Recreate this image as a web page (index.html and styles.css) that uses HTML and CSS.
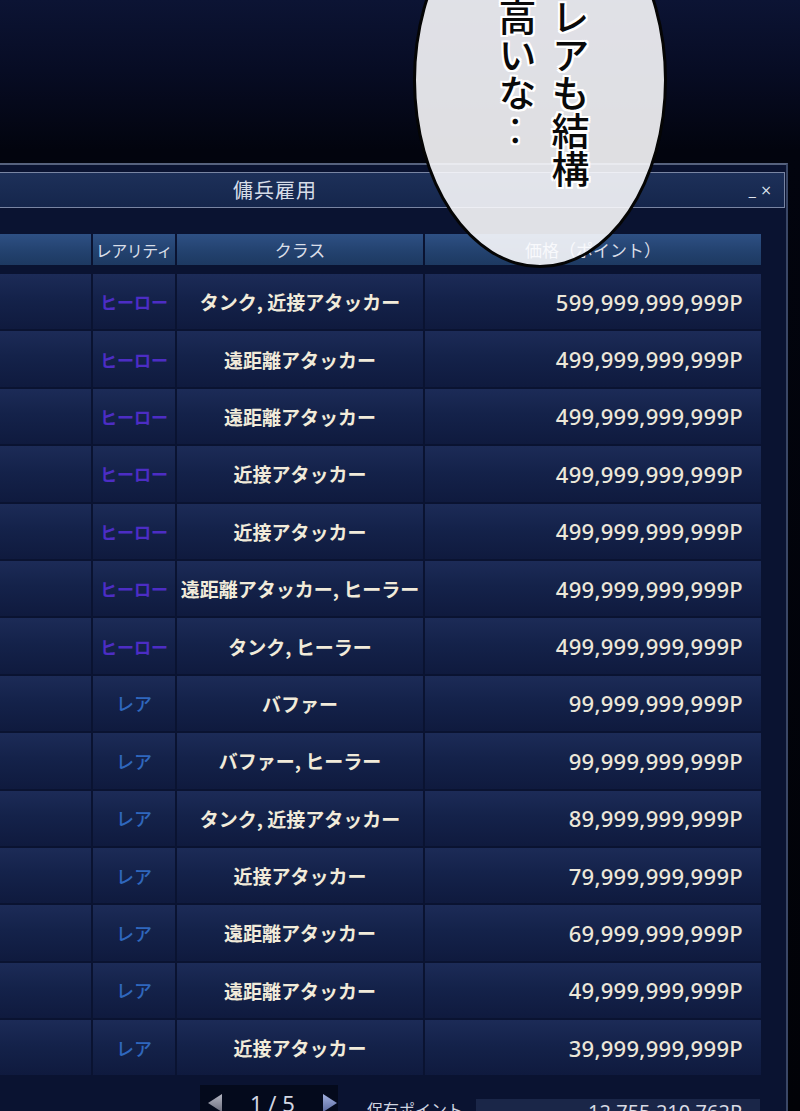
FILE: index.html
```html
<!DOCTYPE html>
<html lang="ja">
<head>
<meta charset="utf-8">
<title>傭兵雇用</title>
<link rel="stylesheet" href="styles.css">
</head>
<body>
<div class="stage">
  <div class="window">
    <div class="titlebar">
      <span class="title">傭兵雇用</span>
      <span class="controls">_ ×</span>
    </div>
    <div class="content">
      <div class="table">
        <div class="thead">
          <div class="th"></div>
          <div class="th th-narrow">レアリティ</div>
          <div class="th">クラス</div>
          <div class="th">価格（ポイント）</div>
        </div>
        <div class="tbody">
          <div class="tr"><div class="td"></div><div class="td hero">ヒーロー</div><div class="td cls">タンク, 近接アタッカー</div><div class="td price">599,999,999,999P</div></div>
          <div class="tr"><div class="td"></div><div class="td hero">ヒーロー</div><div class="td cls">遠距離アタッカー</div><div class="td price">499,999,999,999P</div></div>
          <div class="tr"><div class="td"></div><div class="td hero">ヒーロー</div><div class="td cls">遠距離アタッカー</div><div class="td price">499,999,999,999P</div></div>
          <div class="tr"><div class="td"></div><div class="td hero">ヒーロー</div><div class="td cls">近接アタッカー</div><div class="td price">499,999,999,999P</div></div>
          <div class="tr"><div class="td"></div><div class="td hero">ヒーロー</div><div class="td cls">近接アタッカー</div><div class="td price">499,999,999,999P</div></div>
          <div class="tr"><div class="td"></div><div class="td hero">ヒーロー</div><div class="td cls">遠距離アタッカー, ヒーラー</div><div class="td price">499,999,999,999P</div></div>
          <div class="tr"><div class="td"></div><div class="td hero">ヒーロー</div><div class="td cls">タンク, ヒーラー</div><div class="td price">499,999,999,999P</div></div>
          <div class="tr"><div class="td"></div><div class="td rare">レア</div><div class="td cls">バファー</div><div class="td price">99,999,999,999P</div></div>
          <div class="tr"><div class="td"></div><div class="td rare">レア</div><div class="td cls">バファー, ヒーラー</div><div class="td price">99,999,999,999P</div></div>
          <div class="tr"><div class="td"></div><div class="td rare">レア</div><div class="td cls">タンク, 近接アタッカー</div><div class="td price">89,999,999,999P</div></div>
          <div class="tr"><div class="td"></div><div class="td rare">レア</div><div class="td cls">近接アタッカー</div><div class="td price">79,999,999,999P</div></div>
          <div class="tr"><div class="td"></div><div class="td rare">レア</div><div class="td cls">遠距離アタッカー</div><div class="td price">69,999,999,999P</div></div>
          <div class="tr"><div class="td"></div><div class="td rare">レア</div><div class="td cls">遠距離アタッカー</div><div class="td price">49,999,999,999P</div></div>
          <div class="tr"><div class="td"></div><div class="td rare">レア</div><div class="td cls">近接アタッカー</div><div class="td price">39,999,999,999P</div></div>
        </div>
      </div>
      <div class="footer">
        <div class="pager">
          <svg class="arrow arrow-left" width="16" height="20" viewBox="0 0 16 20"><defs><linearGradient id="gl" x1="0" y1="0" x2="0" y2="1"><stop offset="0" stop-color="#b4b6c2"/><stop offset="1" stop-color="#6c6e7e"/></linearGradient></defs><polygon points="15,1 15,19 1,10" fill="url(#gl)"/></svg>
          <span class="page">1 / 5</span>
          <svg class="arrow" width="16" height="20" viewBox="0 0 16 20"><defs><linearGradient id="gr" x1="0" y1="0" x2="0" y2="1"><stop offset="0" stop-color="#a3b2e0"/><stop offset="1" stop-color="#5b6aa0"/></linearGradient></defs><polygon points="1,1 1,19 15,10" fill="url(#gr)"/></svg>
        </div>
        <div class="owned-label">保有ポイント</div>
        <div class="owned-box">12,755,210,762P</div>
      </div>
    </div>
  </div>
  <div class="bubble"></div>
  <div class="bubble-text">レアも結構<br>高いな‥</div>
</div>
</body>
</html>
```
FILE: styles.css
```css
html, body {
  margin: 0;
  padding: 0;
}
body {
  width: 800px;
  height: 1111px;
  overflow: hidden;
  background: linear-gradient(180deg, #0c1434 0px, #070c24 70px, #02040e 150px, #010207 1111px);
  font-family: "Noto Sans CJK JP", "Noto Sans", sans-serif;
}
.stage {
  position: relative;
  width: 800px;
  height: 1111px;
  overflow: hidden;
}
.window {
  margin-top: 163px;
  width: 786px;
  height: 960px;
  border-top: 2px solid #56627e;
  border-right: 2px solid #3a4766;
  background: #0a1331;
  padding-top: 7px;
}
.titlebar {
  box-sizing: border-box;
  height: 36px;
  margin-right: 1px;
  border: 1px solid #7985a3;
  border-left: none;
  background: linear-gradient(180deg, #1d3059 0%, #15264c 100%);
  display: flex;
  align-items: center;
  justify-content: space-between;
}
.title {
  margin-left: 233px;
  font-size: 20px;
  letter-spacing: 1px;
  color: #d6dce8;
  line-height: 1;
}
.controls {
  margin-right: 12px;
  font-family: "DejaVu Sans", sans-serif;
  font-size: 14px;
  color: #dfe4ee;
}
.content {
  padding-top: 26px;
}
.table {
  width: 761px;
}
.thead, .tr {
  display: grid;
  grid-template-columns: 91px 82px 246px 336px;
  column-gap: 2px;
}
.thead {
  height: 31px;
}
.th {
  background: linear-gradient(180deg, #2e5084 0%, #23426f 55%, #1d3961 100%);
  color: #d9dee8;
  font-size: 17px;
  display: flex;
  align-items: center;
  justify-content: center;
  line-height: 1;
}
.th-narrow {
  font-size: 16px;
  letter-spacing: -0.5px;
}
.tbody {
  margin-top: 9px;
  display: flex;
  flex-direction: column;
  gap: 2px;
}
.tr {
  height: 55.4px;
}
.td {
  background: linear-gradient(180deg, #1c2b57 0%, #14224a 45%, #0f1a3e 100%);
  display: flex;
  align-items: center;
  justify-content: center;
  line-height: 1;
}
.hero {
  color: #4c2dc4;
  font-size: 17px;
  font-weight: 700;
}
.rare {
  color: #2f67bd;
  font-size: 18px;
  font-weight: 500;
}
.cls {
  color: #f1ebda;
  font-size: 19px;
  font-weight: 700;
  white-space: nowrap;
}
.price {
  justify-content: flex-end;
  padding-right: 18px;
  color: #ece7d9;
  font-family: "Noto Sans", sans-serif;
  font-size: 22px;
  font-weight: 500;
  letter-spacing: 0.3px;
}
.footer {
  display: flex;
  align-items: flex-start;
  margin-top: 10px;
}
.pager {
  flex: none;
  margin-left: 200px;
  width: 138px;
  height: 36px;
  background: #040a1c;
  display: flex;
  align-items: center;
  box-sizing: border-box;
  white-space: nowrap;
}
.arrow {
  display: block;
  flex: none;
}
.arrow-left {
  margin-left: 7px;
}
.page {
  margin-left: 27px;
  margin-right: 27px;
  font-family: "Noto Sans", sans-serif;
  font-size: 22px;
  color: #d3d7e2;
  line-height: 1;
}
.owned-label {
  flex: none;
  margin-left: 29px;
  margin-top: 16px;
  font-size: 16px;
  color: #cfd4e0;
  line-height: 1;
}
.owned-box {
  flex: none;
  margin-left: 13px;
  margin-top: 14px;
  width: 284px;
  height: 30px;
  box-sizing: border-box;
  background: #1a2648;
  color: #d8dbe4;
  font-family: "Noto Sans", sans-serif;
  font-size: 20px;
  text-align: right;
  padding-right: 18px;
  padding-top: 3px;
  line-height: 1;
}
.bubble {
  position: absolute;
  left: 413px;
  top: -108px;
  width: 254px;
  height: 376px;
  box-sizing: border-box;
  border-radius: 50%;
  border: 3px solid #050505;
  background: rgba(252, 252, 254, 0.885);
}
.bubble-text {
  position: absolute;
  left: 491px;
  top: -2px;
  writing-mode: vertical-rl;
  font-family: "Noto Sans CJK JP", sans-serif;
  font-size: 38px;
  line-height: 53px;
  font-weight: 500;
  color: #0a0a0a;
  text-shadow:
    2px 0 0 #fff, -2px 0 0 #fff, 0 2px 0 #fff, 0 -2px 0 #fff,
    2px 2px 0 #fff, -2px -2px 0 #fff, 2px -2px 0 #fff, -2px 2px 0 #fff;
}
```
